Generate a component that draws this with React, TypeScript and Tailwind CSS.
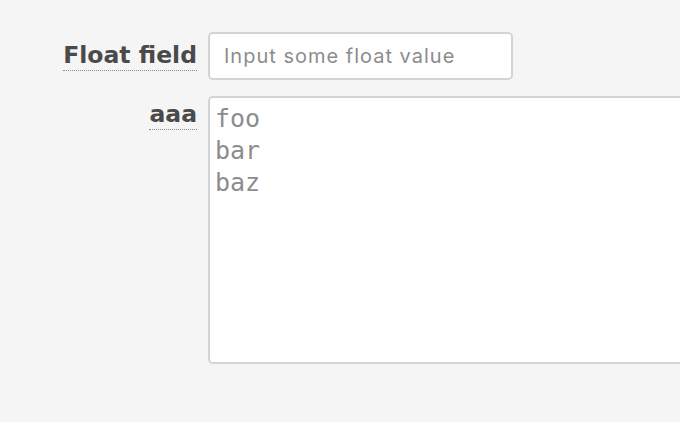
export default function App() {
  return (
    <div className="h-[422px] w-[680px] overflow-hidden bg-[#f5f5f5]">
      <div className="grid grid-cols-[197px_1fr] gap-x-[11px] gap-y-[16px] pt-[32px]">
        {/* float field row */}
        <div className="flex h-[48px] items-center justify-end">
          <span className="border-b border-dotted border-[#8a8a8a] pb-[1px] text-[23.5px] font-bold leading-[27px] text-[#4a4a4a] [font-family:'DejaVu_Sans',sans-serif]">
            Float field
          </span>
        </div>
        <div>
          <input
            className="h-[48px] w-[305px] rounded-[5px] border-2 border-[#d4d4d4] bg-white px-[14px] text-[20px] tracking-[1px] text-[#333] outline-none placeholder:text-[#8c8c8c] [font-family:Inter,sans-serif]"
            placeholder="Input some float value"
          />
        </div>

        {/* textarea row */}
        <div className="flex justify-end pt-[5px]">
          <span className="self-start border-b border-dotted border-[#8a8a8a] pb-[1px] text-[23.5px] font-bold leading-[27px] text-[#4a4a4a] [font-family:'DejaVu_Sans',sans-serif]">
            aaa
          </span>
        </div>
        <div>
          <textarea
            className="block h-[268px] w-[520px] resize-none rounded-[5px] border-2 border-[#d4d4d4] bg-white px-[5px] pt-[5px] text-[25px] leading-[32px] text-[#8c8c8c] outline-none [font-family:'DejaVu_Sans_Mono',monospace]"
            defaultValue={"foo\nbar\nbaz"}
          />
        </div>
      </div>
    </div>
  );
}
